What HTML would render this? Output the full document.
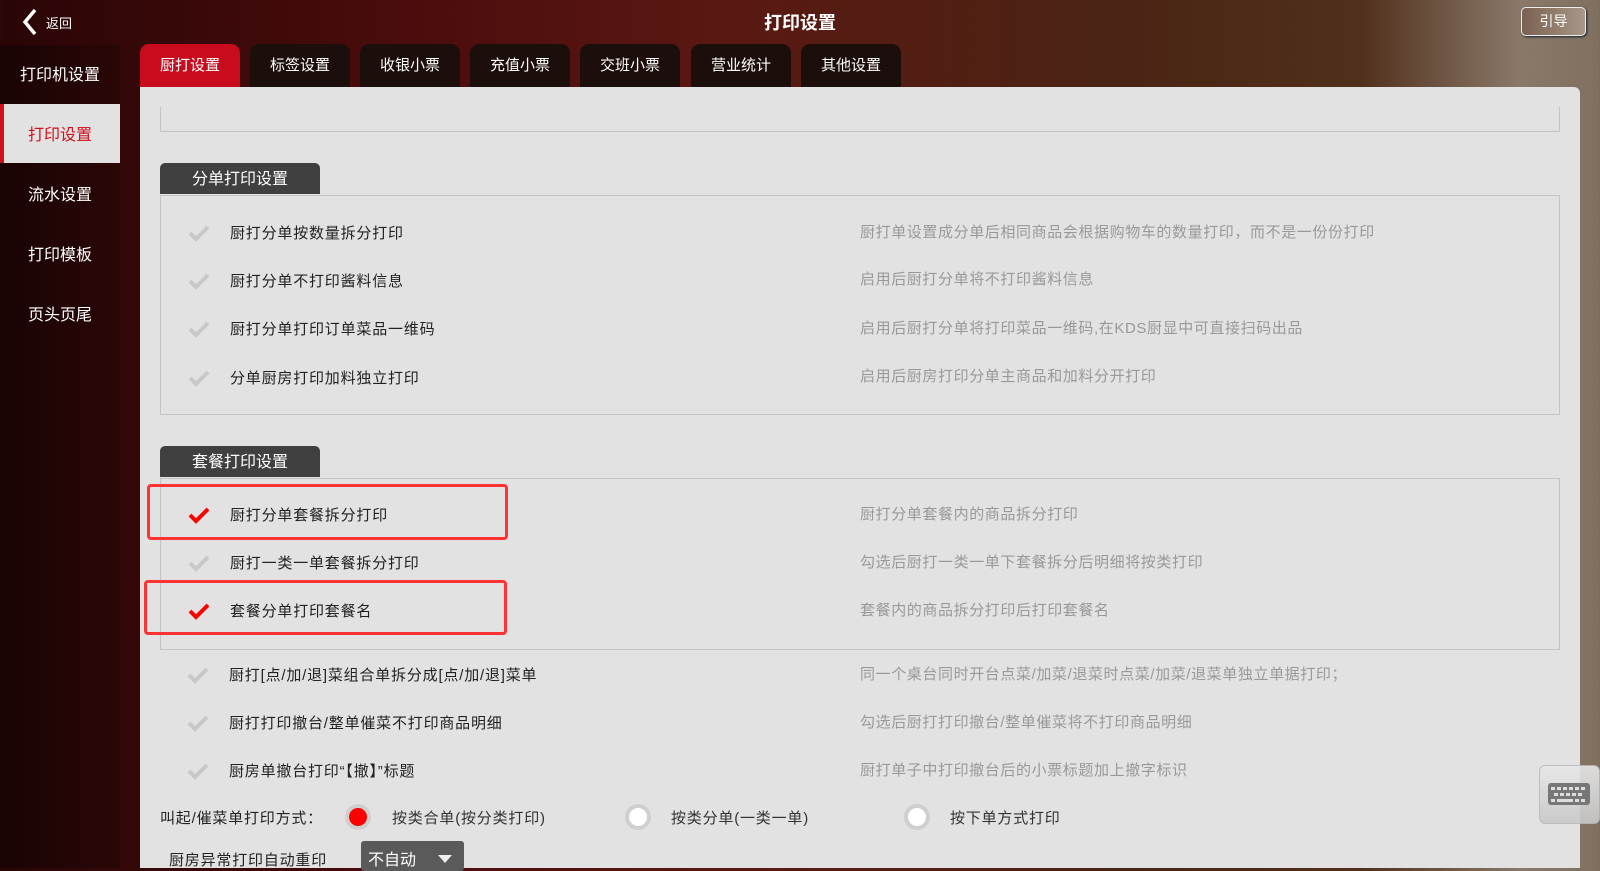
<!DOCTYPE html>
<html><head><meta charset="utf-8"><style>
*{margin:0;padding:0;box-sizing:border-box}
body{width:1600px;height:868px;overflow:hidden;position:relative;font-family:"Liberation Sans","Noto Sans CJK SC",sans-serif;background:linear-gradient(90deg,#2a0506 0%,#4a0c0c 25%,#5a1812 45%,#4a2414 70%,#50301c 85%,#8a7868 95%,#807060 100%)}
.a{position:absolute;white-space:nowrap}
.side{left:0;top:45px;width:120px;height:823px;background:linear-gradient(90deg,#1a0404,#2a0606)}
.si{left:0;width:120px;text-align:center;color:#fff;font-size:16px;line-height:20px}
.tab{top:44px;width:100px;height:43px;border-radius:9px 9px 0 0;background:#1c0e0a;color:#fff;font-size:15px;text-align:center;line-height:43px}
.panel{left:140px;top:87px;width:1440px;height:781px;background:#e2e2e2;border-radius:0 6px 0 0}
.box{border:1px solid #c4c4c4;border-top:none}
.hd{width:160px;height:31px;background:#404040;border-radius:5px 5px 0 0;color:#fff;font-size:16px;text-align:center;line-height:33px}
.lb{font-size:15px;color:#222;line-height:20px;letter-spacing:0.8px}
.ds{font-size:15px;color:#999;line-height:20px;letter-spacing:0.6px}
.ck{width:22px;height:18px}
.rb{border:3px solid #f33;border-radius:4px}
.rad{width:26px;height:26px;border-radius:50%;background:#fff;border:4px solid #cfcfcf}
</style></head><body>
<svg class="a" style="left:22px;top:8px" width="16" height="28" viewBox="0 0 16 28"><path d="M13 2 L3 14 L13 26" stroke="#fff" stroke-width="3.5" fill="none"/></svg>
<div class="a" style="left:46px;top:13px;color:#fff;font-size:13px">返回</div>
<div class="a" style="left:0;width:1600px;top:9px;text-align:center;color:#fff;font-size:18px;font-weight:bold">打印设置</div>
<div class="a" style="left:1521px;top:7px;width:65px;height:29px;border:1px solid #eee;border-radius:5px;background:linear-gradient(90deg,#7a6050,#a89888);color:#fff;text-align:center;line-height:27px;font-size:14px;box-shadow:1px 1px 2px #123">引导</div>

<div class="a side"></div>
<div class="a si" style="top:66px">打印机设置</div>
<div class="a" style="left:0;top:104px;width:120px;height:59px;background:#e2e2e2;border-left:4px solid #d0101c"></div>
<div class="a si" style="top:126px;color:#d0101c">打印设置</div>
<div class="a si" style="top:186px">流水设置</div>
<div class="a si" style="top:246px">打印模板</div>
<div class="a si" style="top:306px">页头页尾</div>

<div class="a tab" style="left:140px;background:#c80c1e">厨打设置</div>
<div class="a tab" style="left:250px">标签设置</div>
<div class="a tab" style="left:360px">收银小票</div>
<div class="a tab" style="left:470px">充值小票</div>
<div class="a tab" style="left:580px">交班小票</div>
<div class="a tab" style="left:691px">营业统计</div>
<div class="a tab" style="left:801px">其他设置</div>

<div class="a panel"></div>
<div class="a box" style="left:160px;top:107px;width:1400px;height:25px"></div>

<div class="a hd" style="left:160px;top:163px">分单打印设置</div>
<div class="a box" style="left:160px;top:195px;width:1400px;height:220px;border-top:1px solid #c4c4c4"></div>
<div class="a hd" style="left:160px;top:446px">套餐打印设置</div>
<div class="a box" style="left:160px;top:478px;width:1400px;height:172px;border-top:1px solid #c4c4c4"></div>
<div class="a rb" style="left:147px;top:484px;width:361px;height:56px"></div>
<div class="a rb" style="left:144px;top:580px;width:363px;height:55px"></div>

<svg width="0" height="0" style="position:absolute"><defs><path id="c" d="M2 9 L8 15 L20 3" stroke-width="4" fill="none"/></defs></svg>
<svg class="a ck" style="left:188px;top:224px" stroke="#c8c8c8"><use href="#c"/></svg><div class="a lb" style="left:230px;top:224px">厨打分单按数量拆分打印</div><div class="a ds" style="left:860px;top:223px">厨打单设置成分单后相同商品会根据购物车的数量打印，而不是一份份打印</div>
<svg class="a ck" style="left:188px;top:272px" stroke="#c8c8c8"><use href="#c"/></svg><div class="a lb" style="left:230px;top:272px">厨打分单不打印酱料信息</div><div class="a ds" style="left:860px;top:270px">启用后厨打分单将不打印酱料信息</div>
<svg class="a ck" style="left:188px;top:320px" stroke="#c8c8c8"><use href="#c"/></svg><div class="a lb" style="left:230px;top:320px">厨打分单打印订单菜品一维码</div><div class="a ds" style="left:860px;top:319px">启用后厨打分单将打印菜品一维码,在KDS厨显中可直接扫码出品</div>
<svg class="a ck" style="left:188px;top:369px" stroke="#c8c8c8"><use href="#c"/></svg><div class="a lb" style="left:230px;top:369px">分单厨房打印加料独立打印</div><div class="a ds" style="left:860px;top:367px">启用后厨房打印分单主商品和加料分开打印</div>

<svg class="a ck" style="left:188px;top:506px" stroke="#f00"><use href="#c"/></svg><div class="a lb" style="left:230px;top:506px">厨打分单套餐拆分打印</div><div class="a ds" style="left:860px;top:505px">厨打分单套餐内的商品拆分打印</div>
<svg class="a ck" style="left:188px;top:554px" stroke="#c8c8c8"><use href="#c"/></svg><div class="a lb" style="left:230px;top:554px">厨打一类一单套餐拆分打印</div><div class="a ds" style="left:860px;top:553px">勾选后厨打一类一单下套餐拆分后明细将按类打印</div>
<svg class="a ck" style="left:188px;top:602px" stroke="#f00"><use href="#c"/></svg><div class="a lb" style="left:230px;top:602px">套餐分单打印套餐名</div><div class="a ds" style="left:860px;top:601px">套餐内的商品拆分打印后打印套餐名</div>

<svg class="a ck" style="left:187px;top:666px" stroke="#c8c8c8"><use href="#c"/></svg><div class="a lb" style="left:229px;top:666px">厨打[点/加/退]菜组合单拆分成[点/加/退]菜单</div><div class="a ds" style="left:860px;top:665px">同一个桌台同时开台点菜/加菜/退菜时点菜/加菜/退菜单独立单据打印；</div>
<svg class="a ck" style="left:187px;top:714px" stroke="#c8c8c8"><use href="#c"/></svg><div class="a lb" style="left:229px;top:714px">厨打打印撤台/整单催菜不打印商品明细</div><div class="a ds" style="left:860px;top:713px">勾选后厨打打印撤台/整单催菜将不打印商品明细</div>
<svg class="a ck" style="left:187px;top:762px" stroke="#c8c8c8"><use href="#c"/></svg><div class="a lb" style="left:229px;top:762px">厨房单撤台打印“【撤】”标题</div><div class="a ds" style="left:860px;top:761px">厨打单子中打印撤台后的小票标题加上撤字标识</div>

<div class="a lb" style="left:160px;top:809px">叫起/催菜单打印方式：</div>
<div class="a rad" style="left:345px;top:804px;background:#f00"></div><div class="a lb" style="left:392px;top:809px;color:#333">按类合单(按分类打印)</div>
<div class="a rad" style="left:625px;top:804px"></div><div class="a lb" style="left:671px;top:809px;color:#333">按类分单(一类一单)</div>
<div class="a rad" style="left:904px;top:804px"></div><div class="a lb" style="left:950px;top:809px;color:#333">按下单方式打印</div>

<div class="a lb" style="left:169px;top:851px">厨房异常打印自动重印</div>
<div class="a" style="left:361px;top:841px;width:103px;height:30px;background:#5a5a5a;border-radius:3px;color:#fff;font-size:16px;padding:5px 0 0 7px">不自动</div>
<svg class="a" style="left:438px;top:855px" width="14" height="9"><path d="M0 0 L14 0 L7 8Z" fill="#eee"/></svg>

<div class="a" style="left:1539px;top:765px;width:61px;height:59px;border:1px solid #bbb;border-radius:6px;background:linear-gradient(#e8e8e8,#c8c8c8);opacity:.9"></div>
<svg class="a" style="left:1548px;top:783px" width="42" height="23"><rect width="42" height="22" rx="3" fill="#777"/><g fill="#ddd"><rect x="3" y="4" width="4" height="3"/><rect x="9" y="4" width="4" height="3"/><rect x="15" y="4" width="4" height="3"/><rect x="21" y="4" width="4" height="3"/><rect x="27" y="4" width="4" height="3"/><rect x="33" y="4" width="4" height="3"/><rect x="6" y="10" width="4" height="3"/><rect x="12" y="10" width="4" height="3"/><rect x="18" y="10" width="4" height="3"/><rect x="24" y="10" width="4" height="3"/><rect x="30" y="10" width="4" height="3"/><rect x="3" y="16" width="4" height="3"/><rect x="9" y="16" width="16" height="3"/><rect x="27" y="16" width="4" height="3"/><rect x="33" y="16" width="4" height="3"/></g></svg>
</body></html>
